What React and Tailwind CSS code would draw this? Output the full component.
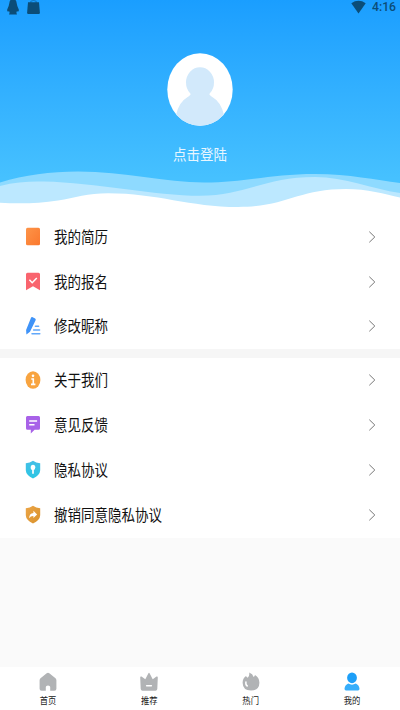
import React from 'react'

const ResumeIcon = () => (
  <svg className="h-[20px] w-4" viewBox="0 0 16 20">
    <defs>
      <linearGradient id="resume" x1="0" y1="0" x2="1" y2="1">
        <stop offset="0" stopColor="#fd9448" />
        <stop offset="1" stopColor="#fb782e" />
      </linearGradient>
    </defs>
    <rect x="1" y="0.8" width="14" height="17.4" rx="1.5" fill="url(#resume)" />
  </svg>
)

const ApplyIcon = () => (
  <svg className="h-[20px] w-4" viewBox="0 0 16 20">
    <path d="M2.5 .8h11A1.5 1.5 0 0 1 15 2.3v16L8 14.2 1 18.3v-16a1.5 1.5 0 0 1 1.5-1.5z" fill="#f9646e" />
    <path d="M4.4 7.8 7.2 10.7 11.8 5.9" fill="none" stroke="#fff" strokeWidth="1.5" />
  </svg>
)

const EditIcon = () => (
  <svg className="h-[20px] w-4" viewBox="0 0 16 20">
    <path d="M7.2 1.1 10.1 2.6Q11.1 3.3 10.6 4.3L5 15.8 1.4 18.4 1.1 14 6 1.7Q6.5.8 7.2 1.1z" fill="#3f93f8" />
    <path d="M10.4 10.2h3.2M8.6 14h6M7 17.7h7.8" stroke="#62a8fa" strokeWidth="1.5" strokeLinecap="round" />
  </svg>
)

const InfoIcon = () => (
  <svg className="h-[20px] w-4" viewBox="0 0 16 20">
    <ellipse cx="8" cy="10" rx="7.4" ry="8.8" fill="#f8a440" />
    <ellipse cx="8" cy="5.8" rx="1.3" ry="1.4" fill="#fff" />
    <path d="M6.3 9h2v5.3M6 14.4h4.4" fill="none" stroke="#fff" strokeWidth="1.6" />
  </svg>
)

const FeedbackIcon = () => (
  <svg className="h-[20px] w-4" viewBox="0 0 16 20">
    <path d="M2.4 1h11.2Q15 1 15 2.6v10.7q0 1.5-1.4 1.5H9.6L5.8 18.6V14.8H2.4Q1 14.8 1 13.3V2.6Q1 1 2.4 1z" fill="#a862e8" />
    <path d="M4.2 6h7.9M4.2 9.8h5.3" stroke="#fff" strokeWidth="1.5" />
  </svg>
)

const PrivacyIcon = () => (
  <svg className="h-[20px] w-4" viewBox="0 0 16 20">
    <defs>
      <linearGradient id="privacy" x1="0" y1="0" x2="0" y2="1">
        <stop offset="0" stopColor="#45bfe6" />
        <stop offset="1" stopColor="#2bc6e4" />
      </linearGradient>
    </defs>
    <path d="M8 .8 Q11 3 15.2 3.3V10.3Q15 15.2 8 18.4Q1 15.2.8 10.3V3.3Q5 3 8 .8z" fill="url(#privacy)" />
    <ellipse cx="8" cy="7.4" rx="2.3" ry="2.6" fill="#fff" />
    <path d="M8 9v4.8" stroke="#fff" strokeWidth="1.7" />
  </svg>
)

const RevokeIcon = () => (
  <svg className="h-[20px] w-4" viewBox="0 0 16 20">
    <defs>
      <linearGradient id="revoke" x1="0" y1="0" x2="1" y2="1">
        <stop offset="0" stopColor="#eca547" />
        <stop offset="1" stopColor="#d9922c" />
      </linearGradient>
    </defs>
    <path d="M8 .8 Q11 3 15.2 3.3V10.3Q15 15.2 8 18.4Q1 15.2.8 10.3V3.3Q5 3 8 .8z" fill="url(#revoke)" />
    <path d="M8.4 5.8 12.1 9.6 8.4 13V11Q5.8 10.8 4.1 13.2 4.2 8.3 8.4 7.9z" fill="#fff" />
  </svg>
)

const HomeIcon = () => (
  <svg className="h-5 w-[18px]" viewBox="0 0 18 20">
    <path d="M7.7 1.2Q9 .2 10.3 1.2L16.5 6.2Q17.4 7 17.4 8.2V16.8Q17.4 18.8 15.5 18.8H11.2V15Q11.2 13.5 9 13.5T6.8 15V18.8H2.5Q.6 18.8 .6 16.8V8.2Q.6 7 1.5 6.2z" fill="#b1b3b5" />
  </svg>
)

const CrownIcon = () => (
  <svg className="h-5 w-[18px]" viewBox="0 0 18 20">
    <path d="M8.3 1.4Q9 .2 9.7 1.4L12.7 7.3 16.5 4.6Q17.8 4 17.8 5.4L17.3 17Q17.1 18.8 15.5 18.8H2.5Q.9 18.8 .7 17L.2 5.4Q.2 4 1.5 4.6L5.3 7.3z" fill="#b1b3b5" />
    <path d="M6.6 13.7h4.8" stroke="#fff" strokeWidth="1.4" strokeLinecap="round" />
  </svg>
)

const HotIcon = () => (
  <svg className="h-5 w-[18px]" viewBox="0 0 18 20">
    <path d="M7.2 .6Q10.8 2 11.6 5 12.6 4.4 13 3 17.4 5.5 17.4 10.8 17.2 18.6 9 18.6 .8 18.6 .6 10.8 .7 6.3 4 4.1 4.5 5.4 5.7 5.8 7.7 4.3 7.2 .6z" fill="#b1b3b5" />
    <path d="M3.9 10Q3.5 13 5.3 14" fill="none" stroke="#fff" strokeWidth="1.5" strokeLinecap="round" />
  </svg>
)

const MineIcon = () => (
  <svg className="h-5 w-[18px]" viewBox="0 0 18 20">
    <ellipse cx="9" cy="5.8" rx="4.9" ry="5.4" fill="#1d9ff8" />
    <path d="M5.2 11.6Q9 13.8 12.8 11.6 16.1 13.1 16.5 16.8 16.5 18.6 15 18.6H3Q1.5 18.6 1.5 16.8 1.9 13.1 5.2 11.6z" fill="#36aefb" />
  </svg>
)

const groups = [
  [
    { label: '我的简历', icon: ResumeIcon },
    { label: '我的报名', icon: ApplyIcon },
    { label: '修改昵称', icon: EditIcon },
  ],
  [
    { label: '关于我们', icon: InfoIcon },
    { label: '意见反馈', icon: FeedbackIcon },
    { label: '隐私协议', icon: PrivacyIcon },
    { label: '撤销同意隐私协议', icon: RevokeIcon },
  ],
]

const tabs = [
  { label: '首页', icon: HomeIcon },
  { label: '推荐', icon: CrownIcon },
  { label: '热门', icon: HotIcon },
  { label: '我的', icon: MineIcon },
]

const StatusBar = () => (
  <div className="flex h-[15px] items-start justify-between pr-[4px] pl-[7px] text-[#0b4d78]">
    <div className="flex gap-[7px]">
      <svg className="h-[15px] w-3" viewBox="0 0 12 15" fill="currentColor">
        <path d="M6-1Q9.2-1 9.7 3.2 10 6 11.8 9.6 12 11.8 10.8 11.4L9.8 11.2 9.4 12.7 10 14.5H2L2.6 12.7 2.2 11.2 1.2 11.4Q0 11.8.2 9.6 2 6 2.3 3.2 2.8-1 6-1z" />
      </svg>
      <svg className="h-[15px] w-[15px]" viewBox="0 0 15 15" fill="currentColor">
        <path d="M2 2.3H13L13.9 12.8Q13.9 14 12.8 14H2.2Q1.1 14 1.1 12.8z" />
        <path d="M4.8 3V1.2Q7.5-.2 10.2 1.2V3" fill="none" stroke="currentColor" strokeWidth=".5" />
      </svg>
    </div>
    <div className="flex gap-[6px]">
      <svg className="h-[15px] w-[15px]" viewBox="0 0 15 15" fill="currentColor">
        <path d="M.3 3.2Q7.5-1.6 14.7 3.2L7.5 13.4z" />
      </svg>
      <span className="origin-center scale-y-110 font-[Roboto] text-[12.2px] leading-[15px] font-medium">4:16</span>
    </div>
  </div>
)

const Waves = () => (
  <svg className="block h-[45px] w-full shrink-0" viewBox="0 165 400 45" preserveAspectRatio="none">
    <path d="M0 182.5C25 175 50 171.5 78 171.5C125 171.5 165 182.5 204 182.5C245 182.5 270 174 315 174C350 174 375 180 400 183V210H0z" fill="#8edaff" />
    <path d="M0 186C15 182 29 181.2 44 181.5C95 182.5 155 195.8 200 195.8C245 195.8 265 177 315 177C345 177 372 189 400 193V210H0z" fill="#bce8ff" />
    <path d="M0 202.8C20 203.8 39 203.5 58 200.5C75 197.5 88 193.2 108 193.2C157 193.2 190 207 238 207C286 207 298 189 346 189C367 189 385 194 400 197.5V210H0z" fill="#fff" />
  </svg>
)

const MenuRow = ({ label, icon: Icon }) => (
  <div className="flex h-[44.75px] items-center pr-[24px] pl-[25px]">
    <Icon />
    <span className="mb-[2px] ml-[13px] flex-1 scale-y-[1.14] text-[13.5px] leading-5 text-[#111]">{label}</span>
    <svg className="h-3 w-2" viewBox="0 0 8 12">
      <path d="M1.3.7 6.8 6 1.3 11.3" fill="none" stroke="#777" strokeWidth="1" />
    </svg>
  </div>
)

const App = () => {
  return (
    <div className="flex h-[710px] w-[400px] flex-col overflow-hidden bg-[#fafafa] font-['Noto_Sans_CJK_SC',sans-serif]">
      <header className="flex h-[210px] shrink-0 flex-col bg-linear-to-b from-[#1a9eff] to-[#46c1ff] to-85%">
        <StatusBar />
        <div className="flex flex-1 flex-col items-center pt-[38px]">
          <svg className="h-[73px] w-[66px]" viewBox="0 0 66 73">
            <defs>
              <clipPath id="avatar">
                <ellipse cx="33" cy="36.5" rx="32.7" ry="36.3" />
              </clipPath>
            </defs>
            <ellipse cx="33" cy="36.5" rx="32.7" ry="36.3" fill="#fff" />
            <g clipPath="url(#avatar)" fill="#d2e9fb">
              <ellipse cx="33" cy="29.5" rx="14" ry="15.3" />
              <path d="M24 38Q25 42 20 44.5 12 49 9 62V75H57V62Q54 49 46 44.5 41 42 42 38z" />
            </g>
          </svg>
          <span className="mt-[17px] scale-y-[1.12] text-[13.5px] leading-5 text-[#e8f6ff]">点击登陆</span>
        </div>
        <Waves />
      </header>

      <main className="flex flex-1 flex-col">
        <section className="bg-white pt-[4.5px]">
          {groups[0].map((item) => <MenuRow key={item.label} {...item} />)}
        </section>
        <div className="h-[9.25px] bg-[#f6f6f6]" />
        <section className="bg-white pb-[1px]">
          {groups[1].map((item) => <MenuRow key={item.label} {...item} />)}
        </section>
      </main>

      <nav className="flex h-[43px] shrink-0 justify-between bg-white px-[39px]">
        {tabs.map(({ label, icon: Icon }) => (
          <div key={label} className="flex w-[18px] flex-col items-center pt-[5px]">
            <Icon />
            <span className="scale-y-[1.12] text-[8.3px] leading-[16px] whitespace-nowrap text-[#222]">{label}</span>
          </div>
        ))}
      </nav>
    </div>
  )
}

export default App
